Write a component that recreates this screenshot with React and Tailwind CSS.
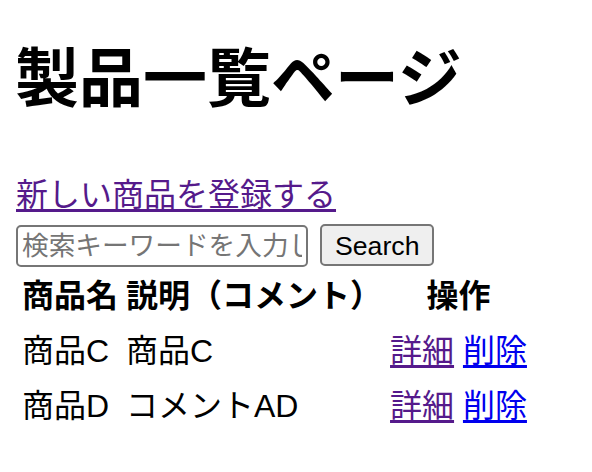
import React from "react";

export default function App() {
  const rows = [
    { name: "商品C", desc: "商品C" },
    { name: "商品D", desc: "コメントAD" },
  ];
  return (
    <div className="min-h-[472px] bg-white px-[16px] text-black font-['Liberation_Sans','Noto_Sans_CJK_JP',sans-serif]">
      <h1 className="pt-[43px] text-[64px] font-bold leading-[72px] -ml-[1px]">製品一覧ページ</h1>
      <div className="mt-[56px] text-[32px] leading-[48px]">
        <a href="#" className="text-[#551a8b] underline underline-offset-[3px]">新しい商品を登録する</a>
      </div>
      <form className="mt-[6px] flex items-start gap-[12px]" onSubmit={(e) => e.preventDefault()}>
        <input
          type="text"
          placeholder="検索キーワードを入力してください"
          className="h-[42px] w-[292px] rounded-[5px] border-2 border-[#767676] bg-white px-[4px] text-[26.67px] text-black placeholder:text-[#757575] outline-none font-['Liberation_Sans','Noto_Sans_CJK_JP',sans-serif]"
        />
        <button
          type="submit"
          className="-mt-px h-[42px] rounded-[5px] border-2 border-[#767676] bg-[#efefef] px-[13px] text-[26.67px] text-black font-['Liberation_Sans','Noto_Sans_CJK_JP',sans-serif]"
        >
          Search
        </button>
      </form>
      <table className="border-separate border-spacing-[4px] text-[32px] leading-[47px]">
        <thead>
          <tr>
            <th className="p-[2px] text-center font-bold">商品名</th>
            <th className="p-[2px] text-center font-bold">説明（コメント）</th>
            <th className="p-[2px] text-center font-bold">操作</th>
          </tr>
        </thead>
        <tbody>
          {rows.map((r) => (
            <tr key={r.name}>
              <td className="p-[2px]">{r.name}</td>
              <td className="p-[2px]">{r.desc}</td>
              <td className="p-[2px]">
                <a href="#" className="text-[#551a8b] underline underline-offset-[3px]">詳細</a>{" "}
                <a href="#" className="text-[#0000ee] underline underline-offset-[3px]">削除</a>
              </td>
            </tr>
          ))}
        </tbody>
      </table>
    </div>
  );
}
